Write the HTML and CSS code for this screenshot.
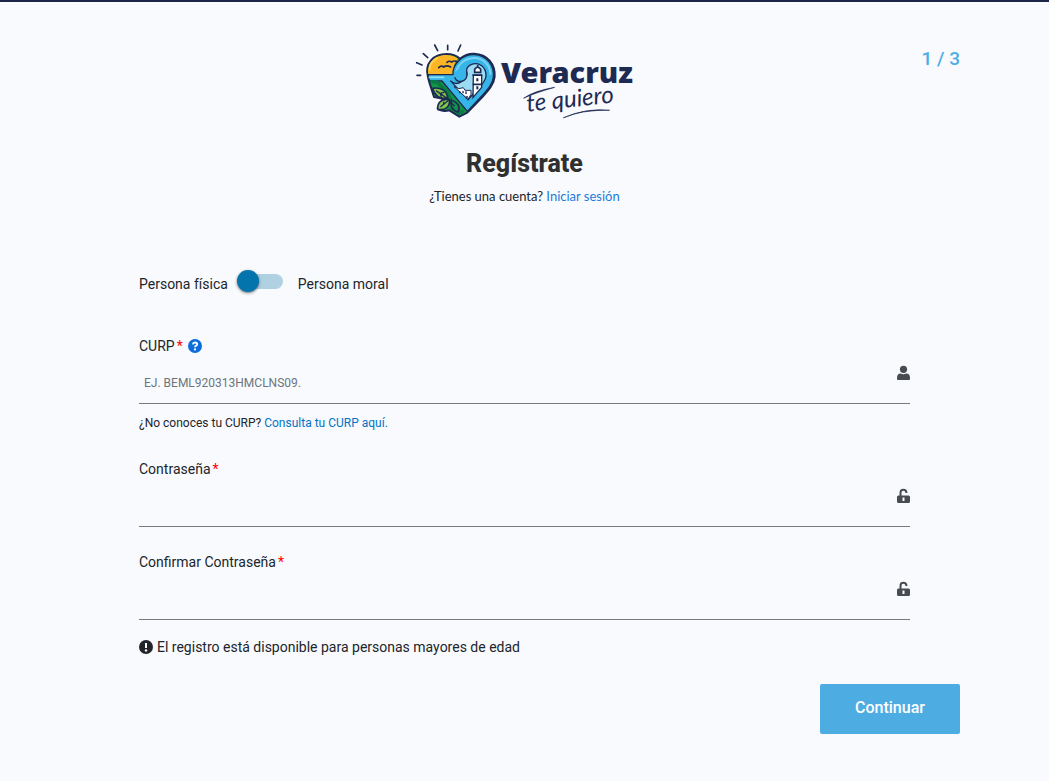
FILE: index.html
```html
<!DOCTYPE html>
<html lang="es">
<head>
<meta charset="utf-8">
<meta name="viewport" content="width=device-width, initial-scale=1">
<title>Regístrate</title>
<link rel="stylesheet" href="styles.css">
</head>
<body>
<main class="page">
  <header class="header">
    <svg class="logo" viewBox="0 0 690 267" role="img" aria-label="Veracruz te quiero">
      <g fill="none" stroke="#1f2a52" stroke-width="5" stroke-linecap="round">
        <path d="M74 27l9 17M113 28v13M152 27l-8 18M40 53l13 12M20 80l16 7M21 118h11"/>
      </g>
      <path d="M54 124C43 82 70 54 110 54Q134 54 150 68Q169 52 193 53C232 55 256 84 254 122C252 146 234 165 217 183L172 230L148 242L118 223C96 229 85 220 83 216L99 188L72 183L58 139Z" fill="#129447" stroke="#1f2a52" stroke-width="6" stroke-linejoin="round"/>
      <path d="M55 114C50 80 76 57 110 57Q130 57 144 68Q128 85 130 114Z" fill="#fdb525"/>
      <path d="M59 103C58 84 70 72 83 65" fill="none" stroke="#ffd453" stroke-width="6"/>
      <path d="M55 116H129C127 86 155 55 193 56C230 58 254 87 250 123C248 143 235 158 218 177L172 226L96 135H58Z" fill="#36b5e9" stroke="#1f2a52" stroke-width="4" stroke-linejoin="round"/>
      <path d="M138 119C138 90 158 69 190 66C221 65 241 89 241 114" fill="none" stroke="#7bd3f4" stroke-width="6" stroke-linecap="round"/>
      <path d="M121 134Q137 149 154 137Q176 124 170 107Q168 93 183 86C207 76 229 94 228 120C226 140 207 154 195 168L174 191Z" fill="#9bdcf4" stroke="#1f2a52" stroke-width="4"/>
      <path d="M133 111Q135 138 154 136Q176 131 170 107Q153 118 145 99Z" fill="#36b5e9"/>
      <path d="M170 107Q175 132 154 136Q140 139 134 124" fill="none" stroke="#1f2a52" stroke-width="4"/>
      <path d="M56 124H103" stroke="#91dcf7" stroke-width="5"/>
      <path d="M132 152l14 6l14-3l5 8h18v12l-9 15z" fill="#fff" stroke="#1f2a52" stroke-width="3"/>
      <path d="M149 165v7m10-7v7m9-6v8m0 9h6" stroke="#1f2a52" stroke-width="4"/>
      <path d="M190 118h25v36l-26 30z" fill="#fff" stroke="#1f2a52" stroke-width="4"/>
      <path d="M187 117h30M188 145h28M194 109h18v-9q-9-13-18 0zM203 92v-5" fill="#fff" stroke="#1f2a52" stroke-width="5"/>
      <path d="M202 127v9m0 15v9" stroke="#1f2a52" stroke-width="6"/>
      <path d="M86 95q8-8 15-2q9-7 21 0M111 79q7-6 14-1q9-6 17 0" fill="none" stroke="#1f2a52" stroke-width="5" stroke-linecap="round"/>
      <path d="M61 137l20 1l31 31l10 22M121 214l27 17l13-7" fill="none" stroke="#087a43" stroke-width="10"/>
      <g fill="#7fc64b" stroke="#1f2a52" stroke-width="5" stroke-linejoin="round">
        <path d="M68 157C91 153 112 163 113 188C91 188 73 181 68 157Z"/>
        <path d="M83 220C82 199 95 187 119 191C119 211 109 224 83 220Z"/>
        <path d="M124 192C145 200 152 213 144 229C129 223 119 211 124 192Z" fill="#129447"/>
      </g>
      <path d="M78 164l32 22l24 25M91 213l25-20M90 172l13-3M91 173l3 9M101 206v-9" fill="none" stroke="#1f2a52" stroke-width="4"/>
      <text class="logo-name" x="273" y="140">Veracruz</text>
      <text class="logo-tag" x="352" y="227" transform="rotate(-6 352 227)">te quiero</text>
      <path d="M342 186Q374 164 434 154Q378 170 342 186ZM461 245Q528 215 599 223Q571 221 519 228Q491 233 461 245Z" fill="#1f2a52" stroke="#1f2a52" stroke-width="2" stroke-linecap="round"/>
    </svg>
    <p class="step">1 / 3</p>
  </header>
  <section class="intro">
    <h1 class="title">Regístrate</h1>
    <p class="login">¿Tienes una cuenta? <a class="login-link" href="#">Iniciar sesión</a></p>
  </section>
  <form class="form">
    <div class="fields">
      <label class="person" for="person"><span>Persona física</span>
        <input class="switch" id="person" type="checkbox" role="switch">
        <span>Persona moral</span></label>
      <div class="field">
        <div class="label-row"><label for="curp">CURP<span class="required">*</span></label>
          <svg class="help" viewBox="0 0 14 14" role="img" aria-label="Ayuda"><circle cx="7" cy="7" r="7" fill="#0d6edb"/><path d="M4.8 5.3Q5.1 3.5 7 3.5Q9.2 3.5 9.2 5.3Q9.2 6.3 7.9 6.9Q7 7.3 7 8.2" fill="none" stroke="#fff" stroke-width="1.8"/><circle cx="7" cy="10.4" r="1.1" fill="#fff"/></svg>
        </div>
        <div class="control"><input class="input" id="curp" type="text" placeholder="EJ. BEML920313HMCLNS09.">
          <svg class="icon" viewBox="0 0 14 16" aria-hidden="true"><circle cx="7.5" cy="4.3" r="3.6"/><path d="M1 13Q1 8.5 4.5 8.5Q7.5 10 10.5 8.5Q14 8.5 14 13V14Q14 15 13 15H2Q1 15 1 14Z"/></svg>
        </div>
      </div>
      <p class="hint">¿No conoces tu CURP? <a class="hint-link" href="#">Consulta tu CURP aquí.</a></p>
      <div class="field">
        <div class="label-row"><label for="password">Contraseña<span class="required">*</span></label></div>
        <div class="control"><input class="input" id="password" type="password">
          <svg class="icon" viewBox="0 0 14 16" aria-hidden="true"><path d="M4.5 8V4.8Q4.5 1.8 7.3 1.8Q10.3 1.8 10.5 5" fill="none" stroke="currentColor" stroke-width="2"/><path fill-rule="evenodd" d="M2.5 7.5H12.5Q14 7.5 14 9V13.5Q14 15 12.5 15H2.5Q1 15 1 13.5V9Q1 7.5 2.5 7.5ZM6.5 9.5V13H8.5V9.5Z"/></svg>
        </div>
      </div>
      <div class="field">
        <div class="label-row"><label for="confirm">Confirmar Contraseña<span class="required">*</span></label></div>
        <div class="control"><input class="input" id="confirm" type="password">
          <svg class="icon" viewBox="0 0 14 16" aria-hidden="true"><path d="M4.5 8V4.8Q4.5 1.8 7.3 1.8Q10.3 1.8 10.5 5" fill="none" stroke="currentColor" stroke-width="2"/><path fill-rule="evenodd" d="M2.5 7.5H12.5Q14 7.5 14 9V13.5Q14 15 12.5 15H2.5Q1 15 1 13.5V9Q1 7.5 2.5 7.5ZM6.5 9.5V13H8.5V9.5Z"/></svg>
        </div>
      </div>
      <p class="notice"><svg class="alert" viewBox="0 0 14 14" aria-hidden="true"><circle cx="7" cy="7" r="7" fill="#212529"/><path d="M7 3v5" stroke="#fff" stroke-width="2"/><circle cx="7" cy="10.4" r="1.2" fill="#fff"/></svg>El registro está disponible para personas mayores de edad</p>
    </div>
    <button class="submit" type="submit">Continuar</button>
  </form>
</main>
</body>
</html>
```
FILE: styles.css
```css
* { box-sizing: border-box; }
body {
  margin: 0;
  min-height: 100vh;
  border-top: 2px solid #1f2547;
  background: #f8fafe;
  color: #212529;
  font: 14px/20px Roboto, "Noto Sans", sans-serif;
}
p, h1 { margin: 0; }
a { text-decoration: none; }
.page { padding: 34px 89px 46px; }
.header {
  display: grid;
  grid-template-columns: 1fr 230px 1fr;
  align-items: start;
}
.logo { grid-column: 2; width: 230px; height: 89px; }
.logo-name { font: 900 87px "Noto Sans", sans-serif; fill: #1f2a52; }
.logo-tag { font: italic 72px Lato, sans-serif; fill: #1f2a52; }
.step {
  justify-self: end;
  padding-top: 11px;
  color: #4dade3;
  font-size: 19px;
  line-height: 24px;
  font-weight: 500;
}
.intro { padding-top: 23px; text-align: center; }
.title { color: #303030; font-size: 25px; line-height: 32px; font-weight: 800; }
.login { padding-top: 7px; font: 13px/18px Lato, sans-serif; }
.login-link { color: #1c7cda; }
.form { display: flex; flex-direction: column; padding-top: 67px; }
.fields { padding: 0 50px; }
.person {
  display: flex;
  width: max-content;
  height: 24px;
  align-items: center;
  gap: 12px;
  margin-bottom: 40px;
}
.switch {
  appearance: none;
  position: relative;
  width: 43px;
  height: 15px;
  margin: 0 3px 5px 0;
  border-radius: 8px;
  background: #b0d1e2;
}
.switch::before {
  content: "";
  position: absolute;
  top: -4px;
  left: -3px;
  width: 22px;
  height: 22px;
  border-radius: 50%;
  background: #0474ac;
  box-shadow: 0 1px 3px #0008;
}
.switch:checked::before { left: 24px; }
.label-row { display: flex; align-items: center; gap: 5px; height: 20px; }
.required { padding-left: 2px; color: #f00; }
.help { width: 14px; height: 14px; }
.control {
  display: flex;
  align-items: center;
  height: 48px;
  border-bottom: 1px solid #777a7d;
}
.input {
  flex: 1;
  min-width: 0;
  height: 47px;
  padding: 6px 5px 0;
  border: 0;
  outline: 0;
  background: transparent;
  color: #212529;
  font: 12px/18px Roboto, sans-serif;
}
.input::placeholder { color: #6c757d; opacity: 1; }
.icon { width: 14px; height: 16px; margin-bottom: 14px; color: #484c50; fill: #484c50; }
.hint { margin: 10px 0 27px; font-size: 12px; line-height: 18px; }
.hint-link { color: #0474c4; }
.field + .field { margin-top: 25px; }
.notice { display: flex; align-items: center; gap: 4px; margin-top: 17px; }
.alert { width: 14px; height: 14px; flex: none; }
.submit {
  align-self: flex-end;
  width: 140px;
  height: 50px;
  margin-top: 27px;
  padding: 0 0 3px;
  border: 0;
  border-radius: 2px;
  background: #4dade3;
  color: #fff;
  font: 500 16px/20px Roboto, sans-serif;
}
```
